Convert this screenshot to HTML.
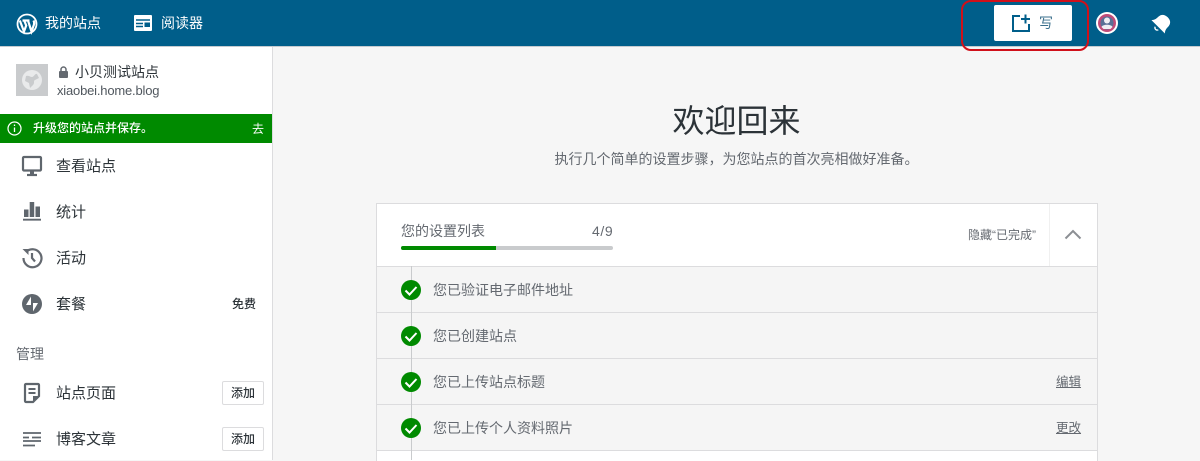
<!DOCTYPE html>
<html lang="zh"><head><meta charset="utf-8"><style>
html,body{margin:0;padding:0}
body{width:1200px;height:460px;overflow:hidden;position:relative;background:#f6f6f6;font-family:"Liberation Sans","Noto Sans CJK SC",sans-serif;color:#2c3338}
.a{position:absolute;white-space:nowrap}
svg{position:absolute;display:block;overflow:visible}
.nav{font-size:15px;line-height:20px;color:#2c3338;left:56px}
.t{font-size:14px;line-height:18px;color:#646970;left:433px}
.row{position:absolute;left:377px;width:720px;height:45px;background:#f5f5f5;border-bottom:1px solid #dcdcde}
.add{position:absolute;left:222px;width:40px;height:22px;border:1px solid #dcdcde;border-radius:2px;background:#fff;font-size:12px;font-weight:500;line-height:22px;text-align:center;color:#2c3338}
</style></head><body>
<div class="a" style="left:0;top:0;width:1200px;height:46px;background:#005e8a;border-bottom:1px solid #c5cbd0"></div>
<svg style="left:16px;top:13px" width="22" height="22" viewBox="0 0 22 22"><circle cx="11" cy="11" r="9.500" fill="none" stroke="#fff" stroke-width="1.800"/><path d="M3.800 7.500L8 18.500l2.200-6-2-5H6.500M8.500 7.500h5M12 7.500l3.500 11 2.500-7c.5-1.500 0-3-.5-4" fill="none" stroke="#fff" stroke-width="2.200"/></svg>
<div class="a" style="left:45px;top:13px;font-size:14px;line-height:20px;color:#fff">我的站点</div>
<svg style="left:134px;top:15px" width="18" height="16" viewBox="0 0 18 16"><rect width="18" height="16" rx="1" fill="#fff"/><path d="M2 5h14M2 8.500h7M2 11.500h7" stroke="#005e8a" stroke-width="1.400"/><rect x="10.500" y="7.500" width="5.500" height="4.500" fill="#005e8a"/></svg>
<div class="a" style="left:161px;top:13px;font-size:14px;line-height:20px;color:#fff">阅读器</div>
<div class="a" style="left:994px;top:5px;width:78px;height:36px;background:#fff;border-radius:2px"></div>
<svg style="left:1012px;top:14px" width="19" height="18" viewBox="0 0 19 18"><path d="M8 2H1v15h16V10M13.500 0.500v9M9 5h9" fill="none" stroke="#005e8a" stroke-width="2"/></svg>
<div class="a" style="left:1039px;top:14px;font-size:14px;line-height:18px;color:#3a6f8c">写</div>
<div class="a" style="left:961px;top:0;width:124px;height:47px;border:2px solid #d0101a;border-radius:10px"></div>
<svg style="left:1096px;top:12px" width="22" height="22" viewBox="0 0 22 22"><circle cx="11" cy="11" r="11" fill="#fff"/><circle cx="11" cy="11" r="9" fill="#c04a78"/><circle cx="11" cy="11" r="6.500" fill="#5a6f96"/><circle cx="11" cy="8.500" r="3" fill="#f0edf3"/><path d="M5.500 15c1-3 10-3 11 0l-2 2h-7z" fill="#f0edf3"/></svg>
<svg style="left:1151px;top:14px" width="20" height="20" viewBox="0 0 20 20"><g transform="rotate(45 10 10)"><path d="M10 0.500c-5 0-7 3-7 6.500 0 3-.5 5-2.500 7h19c-2-2-2.500-4-2.500-7 0-3.500-2-6.500-7-6.500z" fill="#fff"/><path d="M7.800 16a2.300 2.300 0 0 0 4.400 0" fill="none" stroke="#fff" stroke-width="1.300"/></g></svg>

<div class="a" style="left:0;top:47px;width:272px;height:413px;background:#fff;border-right:1px solid #dcdcde"></div>
<div class="a" style="left:16px;top:64px;width:32px;height:32px;background:#c9cbcd"></div>
<svg style="left:22px;top:70px" width="20" height="20" viewBox="0 0 20 20"><circle cx="10" cy="10" r="10" fill="#e9eaeb"/><path d="M4 6c3-1 4 1 6 1s3-4 5-3l2 4-4 2c-2 1 0 3-2 5l-3 3-1-5-4-2z" fill="#c9cbcd"/></svg>
<svg style="left:58px;top:66px" width="11" height="12" viewBox="0 0 11 12"><path d="M3 5V3.500a2.500 2.500 0 0 1 5 0V5" fill="none" stroke="#646970" stroke-width="1.500"/><rect x="1" y="5" width="9" height="7" rx="1" fill="#646970"/></svg>
<div class="a" style="left:75px;top:63px;font-size:14px;line-height:18px;color:#2c3338">小贝测试站点</div>
<div class="a" style="left:57px;top:82px;font-size:13px;line-height:17px;letter-spacing:-.19px;color:#50575e">xiaobei.home.blog</div>
<div class="a" style="left:0;top:114px;width:272px;height:29px;background:#008a00"></div>
<svg style="left:7px;top:121px" width="15" height="15" viewBox="0 0 15 15"><circle cx="7.500" cy="7.500" r="6.500" fill="none" stroke="#fff" stroke-width="1.200"/><path d="M7.500 6.500v4.500M7.500 3.500v1.500" stroke="#fff" stroke-width="1.300"/></svg>
<div class="a" style="left:33px;top:120px;font-size:12px;line-height:17px;font-weight:500;color:#fff">升级您的站点并保存。</div>
<div class="a" style="left:252px;top:121px;font-size:12px;line-height:17px;color:#fff">去</div>

<svg style="left:22px;top:156px" width="20" height="20" viewBox="0 0 20 20"><rect x="1" y="1" width="18" height="13.500" rx="1" fill="none" stroke="#5f666d" stroke-width="2.200"/><path d="M5 19h10" stroke="#5f666d" stroke-width="2.200"/><path d="M8 15h4v3H8z" fill="#5f666d"/></svg>
<div class="a nav" style="top:157px">查看站点</div>
<svg style="left:23px;top:202px" width="18" height="19" viewBox="0 0 18 19"><path d="M1 7.500h4.500V15H1zM6.700 0h4.500v15H6.700zM12.500 4.500H17V15h-4.500z" fill="#5f666d"/><path d="M0 17.700h18" stroke="#5f666d" stroke-width="1.800"/></svg>
<div class="a nav" style="top:203px">统计</div>
<svg style="left:21px;top:247px" width="22" height="22" viewBox="0 0 22 22"><path d="M5 5a9 9 0 1 1-2.500 6" fill="none" stroke="#646970" stroke-width="2.200"/><path d="M1.500 2L7.500 2v6z" fill="#646970"/><path d="M11 6v5l3 3.500" fill="none" stroke="#646970" stroke-width="2.200"/></svg>
<div class="a nav" style="top:249px">活动</div>
<svg style="left:22px;top:294px" width="20" height="20" viewBox="0 0 20 20"><circle cx="10" cy="10" r="10" fill="#5f666d"/><path d="M9 2.500L4 11h5zM11 17.500l5-8.500h-5z" fill="#fff"/></svg>
<div class="a nav" style="top:295px">套餐</div>
<div class="a" style="left:232px;top:296px;font-size:12px;line-height:17px;font-weight:500;color:#2c3338">免费</div>
<div class="a" style="left:16px;top:345px;font-size:14px;line-height:18px;color:#646970">管理</div>
<svg style="left:24px;top:383px" width="16" height="20" viewBox="0 0 16 20"><path d="M2 1h12a1 1 0 0 1 1 1v11l-6 6H2a1 1 0 0 1-1-1V2a1 1 0 0 1 1-1z" fill="none" stroke="#5f666d" stroke-width="2.200"/><path d="M4.500 6h7M4.500 10h7" stroke="#5f666d" stroke-width="2"/><path d="M9 19v-6h6v1l-5 5z" fill="#5f666d"/></svg>
<div class="a nav" style="top:384px">站点页面</div>
<div class="add" style="top:381px">添加</div>
<svg style="left:23px;top:431px" width="18" height="16" viewBox="0 0 18 16"><path d="M0 2h18M0 6.500h6M9 6.500h9M0 10h18M0 14.500h12" stroke="#5f666d" stroke-width="1.800"/></svg>
<div class="a nav" style="top:430px">博客文章</div>
<div class="add" style="top:427px">添加</div>

<div class="a" style="left:273px;width:927px;top:101px;text-align:center;font-size:32px;line-height:40px;color:#2c3338">欢迎回来</div>
<div class="a" style="left:273px;width:927px;top:150px;text-align:center;font-size:14px;line-height:18px;color:#646970">执行几个简单的设置步骤，为您站点的首次亮相做好准备。</div>

<div class="a" style="left:376px;top:203px;width:720px;height:257px;background:#fff;border:1px solid #dcdcde;border-bottom:0"></div>
<div class="a" style="left:401px;top:222px;font-size:14px;line-height:18px;color:#646970">您的设置列表</div>
<div class="a" style="left:592px;top:222px;font-size:14px;line-height:18px;letter-spacing:.6px;color:#646970">4/9</div>
<div class="a" style="left:401px;top:246px;width:212px;height:4px;background:#c9cbcd;border-radius:2px"></div>
<div class="a" style="left:401px;top:246px;width:95px;height:4px;background:#008a00;border-radius:2px 0 0 2px"></div>
<div class="a" style="left:968px;top:227px;font-size:12px;line-height:16px;color:#646970">隐藏“已完成”</div>
<div class="a" style="left:1049px;top:204px;width:1px;height:62px;background:#f0f0f0"></div>
<svg style="left:1064px;top:228px" width="18" height="12" viewBox="0 0 18 12"><path d="M1.500 10.500L9 3l7.500 7.500" fill="none" stroke="#8c8f94" stroke-width="2"/></svg>

<div class="row" style="top:267px;height:45px;border-top:0"></div>
<div class="a" style="left:377px;top:266px;width:720px;height:1px;background:#dcdcde"></div>
<div class="row" style="top:313px"></div>
<div class="row" style="top:359px"></div>
<div class="row" style="top:405px"></div>
<div class="a" style="left:411px;top:266px;width:1px;height:194px;background:#c9cbcd"></div>

<svg style="left:401px;top:280px" width="20" height="20" viewBox="0 0 20 20"><circle cx="10" cy="10" r="10" fill="#008a00"/><path d="M4.500 10.500l4 4 7-7.500" fill="none" stroke="#fff" stroke-width="2"/></svg>
<svg style="left:401px;top:326px" width="20" height="20" viewBox="0 0 20 20"><circle cx="10" cy="10" r="10" fill="#008a00"/><path d="M4.500 10.500l4 4 7-7.500" fill="none" stroke="#fff" stroke-width="2"/></svg>
<svg style="left:401px;top:372px" width="20" height="20" viewBox="0 0 20 20"><circle cx="10" cy="10" r="10" fill="#008a00"/><path d="M4.500 10.500l4 4 7-7.500" fill="none" stroke="#fff" stroke-width="2"/></svg>
<svg style="left:401px;top:418px" width="20" height="20" viewBox="0 0 20 20"><circle cx="10" cy="10" r="10" fill="#008a00"/><path d="M4.500 10.500l4 4 7-7.500" fill="none" stroke="#fff" stroke-width="2"/></svg>

<div class="a t" style="top:281px">您已验证电子邮件地址</div>
<div class="a t" style="top:327px">您已创建站点</div>
<div class="a t" style="top:373px">您已上传站点标题</div>
<div class="a t" style="top:419px">您已上传个人资料照片</div>
<div class="a" style="left:1056px;top:373px;font-size:12.500px;line-height:18px;color:#646970;text-decoration:underline">编辑</div>
<div class="a" style="left:1056px;top:419px;font-size:12.500px;line-height:18px;color:#646970;text-decoration:underline">更改</div>
</body></html>
